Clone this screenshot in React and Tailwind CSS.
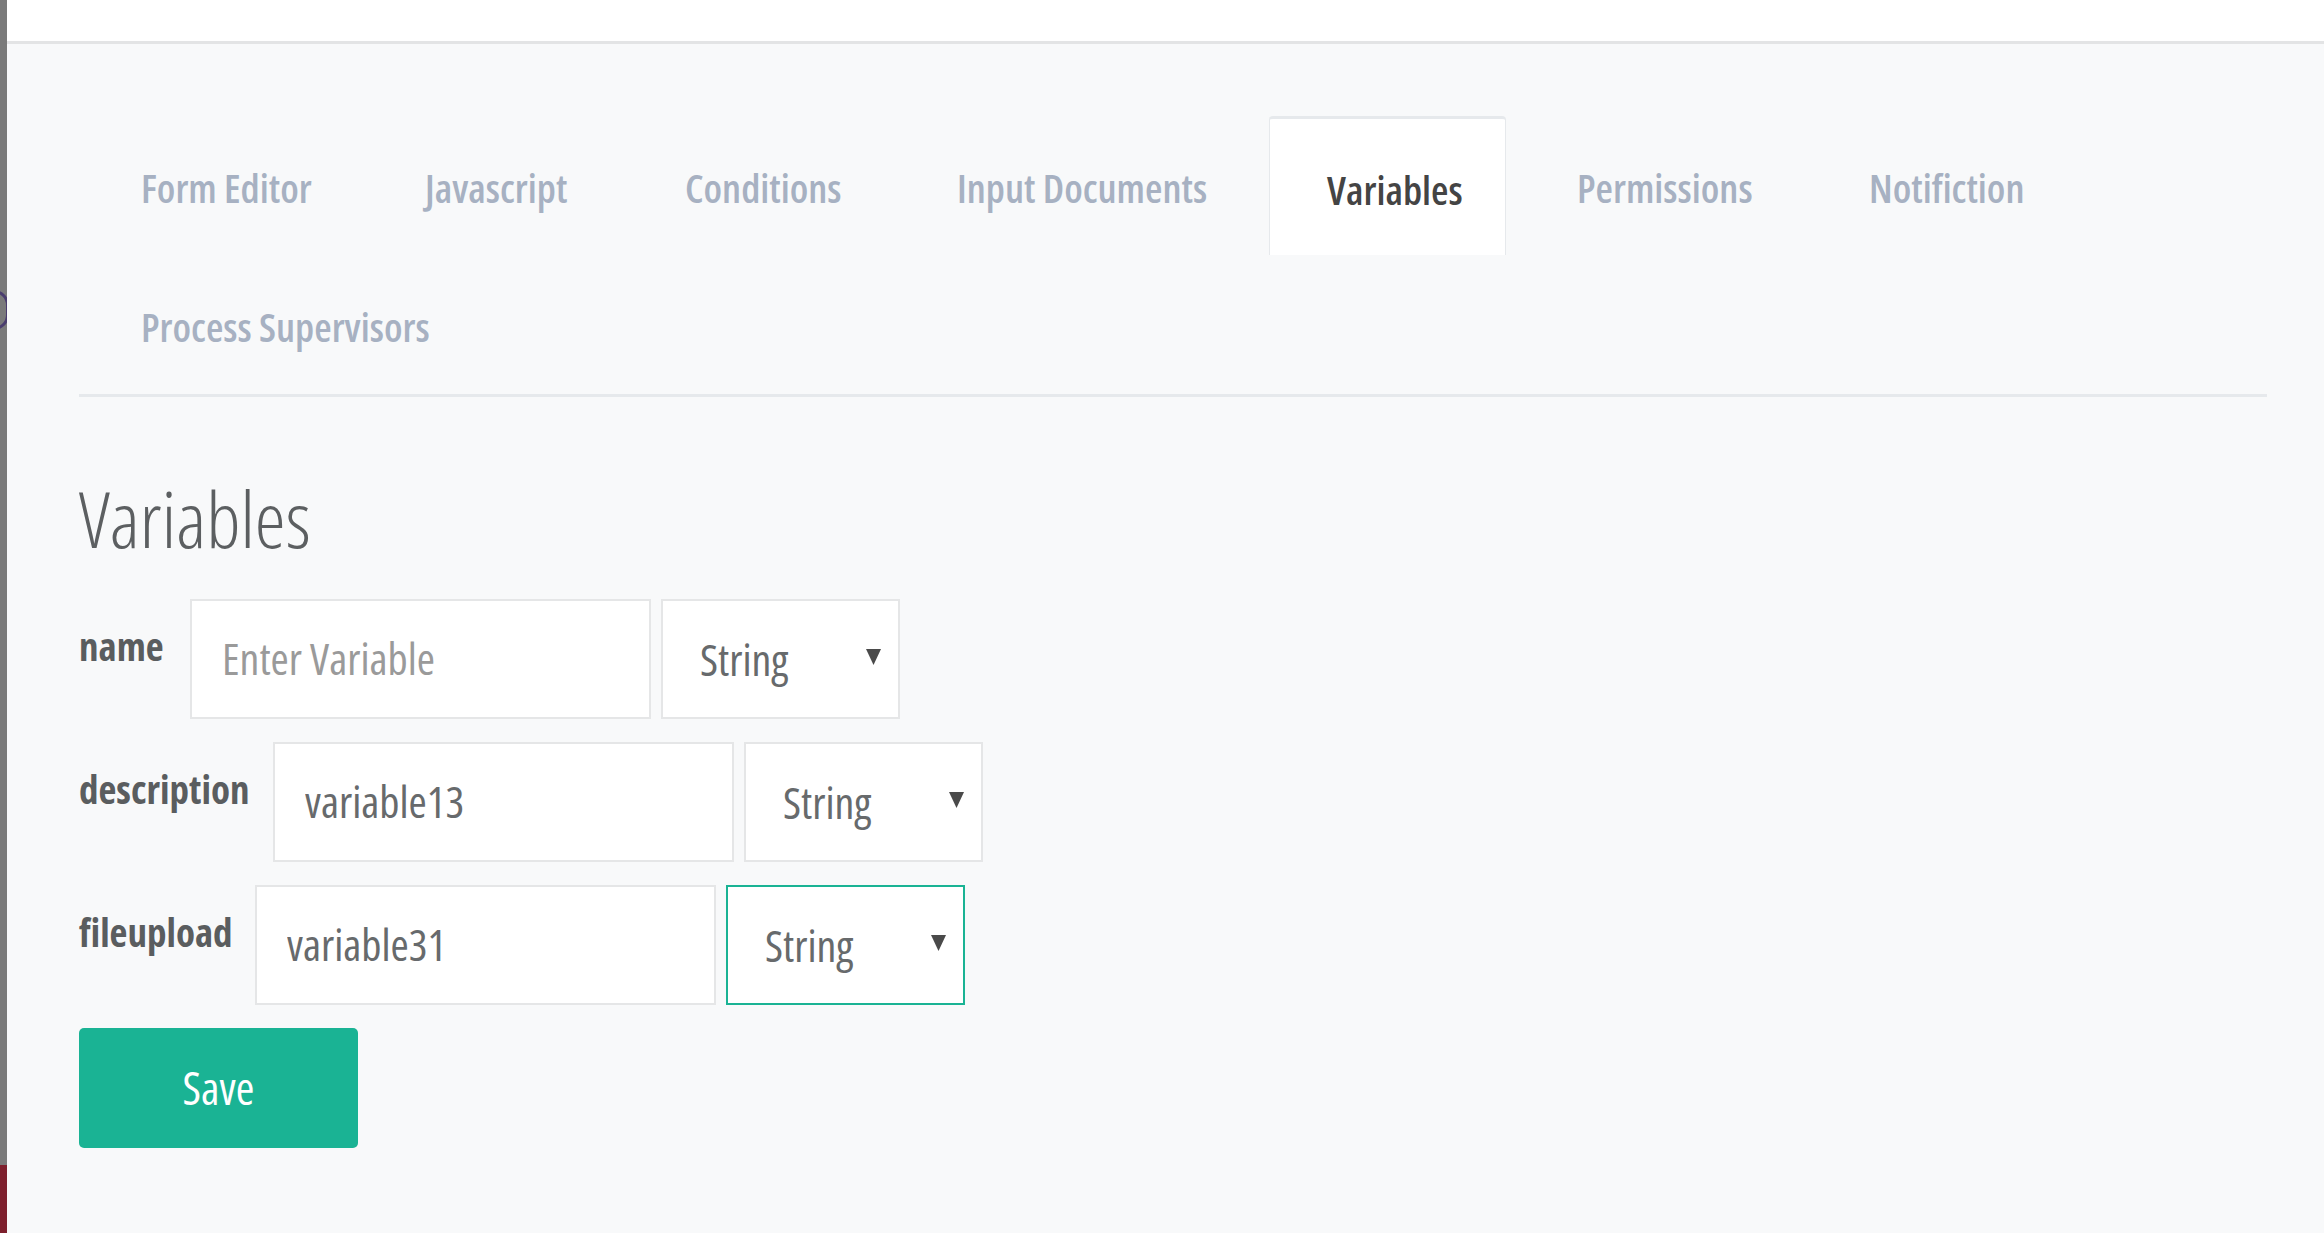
import { useState } from 'react';

// tab widths are taken so the labels keep their place in the row
const tabs = [
  { label: 'Form Editor', width: 'w-[270px]' },
  { label: 'Javascript', width: 'w-[246px]' },
  { label: 'Conditions', width: 'w-[258px]' },
  { label: 'Input Documents', width: 'w-[355px]' },
  { label: 'Variables', width: 'w-[237px]' },
  { label: 'Permissions', width: 'w-[278px]' },
  { label: 'Notifiction', width: 'w-[255px]' },
  { label: 'Process Supervisors', width: 'w-[404px]' },
];

const initialRows = [
  { key: 'name', labelWidth: 'w-[111px]', value: '', placeholder: 'Enter Variable', type: 'String' },
  { key: 'description', labelWidth: 'w-[194px]', value: 'variable13', placeholder: '', type: 'String' },
  { key: 'fileupload', labelWidth: 'w-[176px]', value: 'variable31', placeholder: '', type: 'String' },
];

function TypeSelect({ value, focused }) {
  return (
    <div
      className={`ml-[10px] flex h-[120px] w-[239px] items-center justify-between bg-white pl-[37px] pr-[16px] border-2 ${
        focused ? 'border-[#1ab394]' : 'border-[#e5e6e7]'
      }`}
    >
      <span className="text-[44px] text-[#676a6c]">{value}</span>
      <svg width="17" height="18" viewBox="0 0 17 18" className="mb-[4px]">
        <polygon points="1,1 16,1 8.5,17" fill="#4a4a4a" />
      </svg>
    </div>
  );
}

function App() {
  const [activeTab, setActiveTab] = useState('Variables');
  const [rows, setRows] = useState(initialRows);

  const updateRow = (key, value) => {
    setRows(rows.map(r => (r.key === key ? { ...r, value } : r)));
  };

  return (
    <div className="flex min-h-screen bg-[#f8f9fa] font-['Open_Sans',sans-serif] font-stretch-condensed text-[#676a6c]">
      {/* edge of the window behind */}
      <aside className="flex w-[7px] shrink-0 flex-col overflow-hidden bg-[#7a7a7a]">
        <div className="ml-[-21px] mt-[290px] h-[40px] w-[30px] shrink-0 rounded-full border-[3px] border-[#4a3d6e]" />
        <div className="flex-1" />
        <div className="h-[68px] bg-[#7d1f2c]" />
      </aside>

      <div className="flex flex-1 flex-col">
        <header className="h-[44px] border-b-[3px] border-[#e3e4e5] bg-white" />

        <main className="pl-[72px] pr-[57px]">
          <nav className="mt-[72px] flex flex-wrap border-b-[3px] border-[#e6e9ec] pl-[5px]">
            {tabs.map(tab => {
              const active = tab.label === activeTab;
              return (
                <button
                  key={tab.label}
                  onClick={() => setActiveTab(tab.label)}
                  className={`mr-[14px] flex h-[139px] items-center whitespace-nowrap pl-[57px] pt-[5px] text-left text-[40px] font-semibold ${tab.width} ${
                    active
                      ? 'rounded-t-[4px] border-x border-t-[3px] border-[#e6e9ec] bg-white text-[#444]'
                      : 'text-[#a7b1c2]'
                  }`}
                >
                  {tab.label}
                </button>
              );
            })}
          </nav>

          <h1 className="mt-[82px] text-[78px] font-light leading-none text-[#5c5f61]">Variables</h1>

          <form className="mt-[42px] flex flex-col gap-[23px]" onSubmit={e => e.preventDefault()}>
            {rows.map((row, i) => (
              <div key={row.key} className="flex items-start">
                <label className={`${row.labelWidth} pt-[27px] text-[39px] font-bold leading-[40px] text-[#5a5d5f]`}>
                  {row.key}
                </label>
                <input
                  type="text"
                  value={row.value}
                  placeholder={row.placeholder}
                  onChange={e => updateRow(row.key, e.target.value)}
                  className="h-[120px] w-[461px] border-2 border-[#e5e6e7] bg-white pl-[30px] pb-[2px] text-[44px] text-[#676a6c] outline-none placeholder:text-[#9a9a9a]"
                />
                <TypeSelect value={row.type} focused={i === rows.length - 1} />
              </div>
            ))}

            <button
              type="submit"
              className="h-[120px] w-[279px] rounded-[5px] bg-[#1ab394] text-[45px] text-white"
            >
              Save
            </button>
          </form>
        </main>
      </div>
    </div>
  );
}

export default App;
